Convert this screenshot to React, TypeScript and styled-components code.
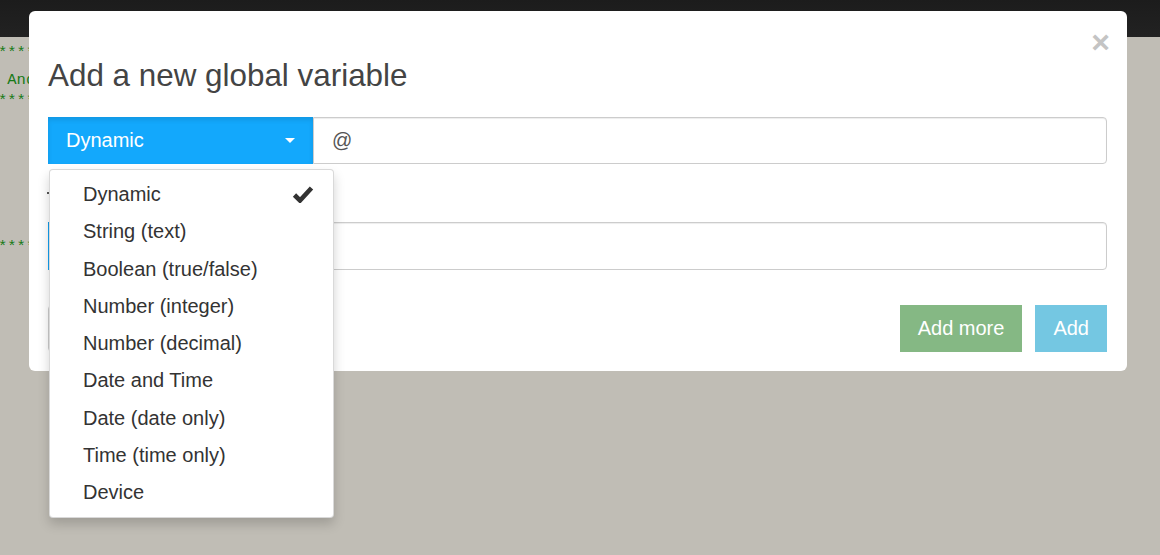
import React from "react";
import styled, { createGlobalStyle } from "styled-components";

const GlobalStyle = createGlobalStyle`
  html, body { margin: 0; padding: 0; }
  body {
    background: #c0bdb5;
    font-family: "Liberation Sans", Arial, sans-serif;
    width: 1160px;
    height: 555px;
    overflow: hidden;
  }
`;

const Page = styled.div`
  position: relative;
  width: 1160px;
  height: 555px;
`;

const TopBar = styled.div`
  height: 37px;
  background: linear-gradient(#1c1c1c, #222222);
`;

const Console = styled.div`
  font-family: "Liberation Mono", "DejaVu Sans Mono", monospace;
  font-size: 15.5px;
  color: #177a17;
  display: flex;
  flex-direction: column;
  width: 29px;
  overflow: hidden;
`;

const ConsoleLine = styled.div<{ $top: number }>`
  margin-top: ${(p) => p.$top}px;
  height: 14px;
  line-height: 14px;
  white-space: pre;
  margin-left: -2px;
`;

const Modal = styled.div`
  position: absolute;
  left: 29px;
  top: 11px;
  width: 1098px;
  box-sizing: border-box;
  padding: 48px 20px 19px 19px;
  background: #fff;
  border-radius: 6px;
  display: flex;
  flex-direction: column;
`;

const Close = styled.span`
  position: absolute;
  top: 15px;
  right: 17px;
  font-size: 32px;
  font-weight: 700;
  line-height: 1;
  color: #c4c4c4;
`;

const Title = styled.h4`
  margin: 0;
  font-size: 31.4px;
  font-weight: 400;
  line-height: 34.5px;
  color: #444;
`;

const InputGroup = styled.div<{ $mt: number; $h: number }>`
  position: relative;
  display: flex;
  margin-top: ${(p) => p.$mt}px;
  height: ${(p) => p.$h}px;
`;

const TypeButton = styled.div`
  width: 265px;
  flex: none;
  box-sizing: border-box;
  padding: 0 18px;
  display: flex;
  align-items: center;
  justify-content: space-between;
  background: #13a8fc;
  box-shadow: inset 0 3px 5px rgba(0, 0, 0, 0.1);
  color: #fff;
  font-size: 20px;
`;

const Caret = styled.span`
  width: 0;
  height: 0;
  border-left: 5px solid transparent;
  border-right: 5px solid transparent;
  border-top: 5px solid #fff;
  margin-left: auto;
`;

const TextInput = styled.div`
  flex: 1;
  box-sizing: border-box;
  border: 1px solid #cccccc;
  border-radius: 0 4px 4px 0;
  box-shadow: inset 0 1px 1px rgba(0, 0, 0, 0.075);
  padding: 0 18px;
  display: flex;
  align-items: center;
  font-size: 20px;
  color: #555;
`;

const LabelRow = styled.div`
  height: 58px;
  display: flex;
  align-items: center;
`;

const Dash = styled.span`
  width: 4px;
  height: 2px;
  margin-left: -1px;
  background: #555;
`;

const Footer = styled.div`
  display: flex;
  align-items: stretch;
  gap: 13px;
  margin-top: 35px;
  height: 47px;
`;

const DefaultButton = styled.div`
  width: 240px;
  box-sizing: border-box;
  border: 1px solid #cccccc;
  border-radius: 4px;
  background: #fff;
  margin-right: auto;
`;

const ActionButton = styled.div<{ $bg: string }>`
  display: flex;
  align-items: center;
  padding: 0 18px;
  background: ${(p) => p.$bg};
  color: #fff;
  font-size: 20px;
`;

const Menu = styled.ul`
  position: absolute;
  top: calc(100% + 5px);
  left: 1px;
  width: 285px;
  box-sizing: border-box;
  margin: 0;
  padding: 6px 0;
  list-style: none;
  background: #fff;
  border: 1px solid rgba(0, 0, 0, 0.15);
  border-radius: 4px;
  box-shadow: 0 6px 12px rgba(0, 0, 0, 0.175);
  z-index: 5;
`;

const MenuItem = styled.li`
  position: relative;
  height: 37.25px;
  line-height: 37.25px;
  padding: 0 20px 0 33px;
  font-size: 20px;
  color: #333;
  white-space: nowrap;
`;

const Check = styled.svg`
  position: absolute;
  right: 19px;
  top: 9px;
`;

const types = [
  "Dynamic",
  "String (text)",
  "Boolean (true/false)",
  "Number (integer)",
  "Number (decimal)",
  "Date and Time",
  "Date (date only)",
  "Time (time only)",
  "Device",
];

export default function App() {
  return (
    <Page>
      <GlobalStyle />
      <TopBar />
      <Console>
        <ConsoleLine $top={9}>{"****"}</ConsoleLine>
        <ConsoleLine $top={13}>{" And"}</ConsoleLine>
        <ConsoleLine $top={7}>{"****"}</ConsoleLine>
        <ConsoleLine $top={132}>{"****"}</ConsoleLine>
      </Console>
      <Modal>
        <Close>×</Close>
        <Title>Add a new global variable</Title>
        <InputGroup $mt={23.5} $h={47}>
          <TypeButton>
            <span>Dynamic</span>
            <Caret />
          </TypeButton>
          <TextInput>@</TextInput>
          <Menu>
            {types.map((t, i) => (
              <MenuItem key={t}>
                {t}
                {i === 0 && (
                  <Check width="22" height="18" viewBox="0 0 22 18">
                    <polyline
                      points="2.5,10 8,15.5 19.5,3"
                      fill="none"
                      stroke="#333"
                      strokeWidth="4.6"
                      strokeLinejoin="miter"
                    />
                  </Check>
                )}
              </MenuItem>
            ))}
          </Menu>
        </InputGroup>
        <LabelRow>
          <Dash />
        </LabelRow>
        <InputGroup $mt={0} $h={48}>
          <TypeButton>
            <Caret />
          </TypeButton>
          <TextInput />
        </InputGroup>
        <Footer>
          <DefaultButton />
          <ActionButton $bg="#85b884">Add more</ActionButton>
          <ActionButton $bg="#74c7e2">Add</ActionButton>
        </Footer>
      </Modal>
    </Page>
  );
}
